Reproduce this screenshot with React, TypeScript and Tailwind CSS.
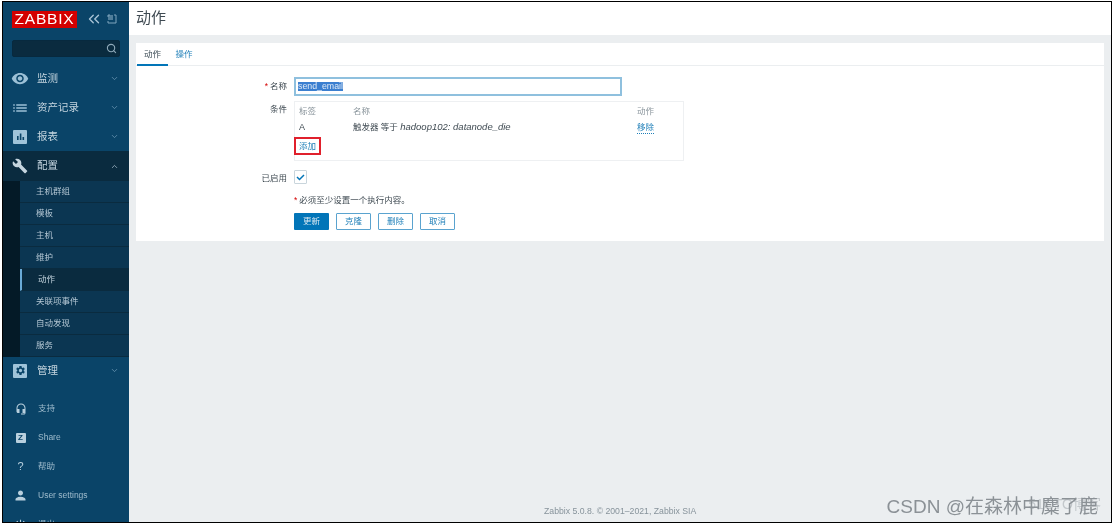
import { ChevronDown, ChevronUp, Search, ChevronsLeft } from "lucide-react";
import { MdBuild, MdHeadsetMic, MdList, MdPerson, MdPowerSettingsNew, MdSettings, MdVisibility } from "react-icons/md";

const font = { fontFamily: '"Liberation Sans", "Noto Sans CJK SC", sans-serif' };

const subItems = ["主机群组", "模板", "主机", "维护", "动作", "关联项事件", "自动发现", "服务"];

function BoxIcon({ children }: { children: React.ReactNode }) {
  return (
    <span className="flex h-[14px] w-[14px] items-center justify-center rounded-[1px] bg-[#9fc3d9] text-[#0a4468]">
      {children}
    </span>
  );
}

function MainItem({
  icon,
  label,
  open,
}: {
  icon: React.ReactNode;
  label: string;
  open?: boolean;
}) {
  return (
    <div className={`flex items-center pl-[8px] pr-[10px] ${open ? "h-[30px] bg-[#0a2b3f]" : "h-[29px]"}`}>
      <span className="flex w-[18px] justify-center text-[#9cc0d6]">{icon}</span>
      <span className="ml-[8px] flex-1 text-[10.5px] text-[#c5d5df]">{label}</span>
      {open ? (
        <ChevronUp size={9} strokeWidth={2} className="text-[#a9bfcd]" />
      ) : (
        <ChevronDown size={9} strokeWidth={2} className="text-[#6f9ab5]" />
      )}
    </div>
  );
}

function SmallItem({ icon, label }: { icon: React.ReactNode; label: string }) {
  return (
    <div className="flex h-[29px] items-center">
      <span className="flex w-[35px] justify-center text-[#b9d0de]">{icon}</span>
      <span className="text-[8.5px] text-[#9fbccd]">{label}</span>
    </div>
  );
}

function Sidebar() {
  return (
    <aside className="flex h-full w-[126px] shrink-0 flex-col overflow-hidden bg-[#0a4468]">
      <div className="flex h-[36px] shrink-0 items-center pb-[2px] pl-[9px]">
        <span className="flex h-[17px] w-[65px] items-center justify-center bg-[#d40000] text-[15.5px] tracking-[0.8px] text-white">
          ZABBIX
        </span>
        <ChevronsLeft size={18} strokeWidth={1.8} className="ml-[8px] text-[#a9c4d6]" />
        <svg width="10" height="10" viewBox="0 0 10 10" className="ml-[4px] text-[#7fa5bd]" fill="none" stroke="currentColor">
          <path d="M1 3V1h2M7 1h2v8H1V7" />
          <rect x="1" y="1" width="5" height="5" fill="currentColor" stroke="none" opacity="0.6" />
        </svg>
      </div>
      <div className="mx-[9px] mt-[2px] flex h-[17px] shrink-0 items-center justify-end rounded-[2px] border border-[#07293e] bg-[#0a2b3f] pr-[2px]">
        <Search size={11} strokeWidth={2.4} className="text-[#8fa9b9]" />
      </div>
      <div className="mt-[7px] flex flex-col">
        <MainItem icon={<MdVisibility size={19} />} label="监测" />
        <MainItem icon={<MdList size={18} />} label="资产记录" />
        <MainItem
          icon={
            <BoxIcon>
              <svg width="9" height="9" viewBox="0 0 9 9" fill="currentColor">
                <rect x="1" y="4" width="1.6" height="4" />
                <rect x="3.8" y="1.5" width="1.6" height="6.5" />
                <rect x="6.5" y="5" width="1.6" height="3" />
              </svg>
            </BoxIcon>
          }
          label="报表"
        />
        <MainItem icon={<MdBuild size={16} className="text-[#c5d5df]" />} label="配置" open />
        <div className="flex bg-[#041a27]">
          <div className="w-[17px] shrink-0" />
          <div className="flex flex-1 flex-col">
            {subItems.map((item) => {
              const active = item === "动作";
              return (
                <div
                  key={item}
                  className={`flex h-[22px] items-center border-b border-[#0a2b3f] pl-[16px] text-[8.5px] ${
                    active
                      ? "border-l-2 border-l-[#6aaad6] bg-[#0a2b3f] pl-[14px] text-[#c5d5df]"
                      : "bg-[#0b3652] text-[#b3c6d3]"
                  }`}
                >
                  {item}
                </div>
              );
            })}
          </div>
        </div>
        <div className="-mt-px">
          <MainItem
            icon={
              <BoxIcon>
                <MdSettings size={11} />
              </BoxIcon>
            }
            label="管理"
          />
        </div>
      </div>
      <div className="mt-[9px] flex flex-col">
        <SmallItem icon={<MdHeadsetMic size={12} />} label="支持" />
        <SmallItem
          icon={
            <span className="flex h-[10px] w-[10px] items-center justify-center rounded-[1px] bg-[#b9d0de] text-[8px] font-bold leading-none text-[#0a4468]">
              Z
            </span>
          }
          label="Share"
        />
        <SmallItem icon={<span className="text-[11px] leading-none">?</span>} label="帮助" />
        <SmallItem icon={<MdPerson size={15} />} label="User settings" />
        <SmallItem icon={<MdPowerSettingsNew size={13} />} label="退出" />
      </div>
    </aside>
  );
}

function ActionForm() {
  return (
    <div className="ml-[7px] mt-[8px] h-[198px] w-[968px] bg-white pt-[1px]">
      <div className="flex h-[22px] border-b border-[#ebeef0] pl-[1px] text-[8.5px]">
        <span className="-mb-px flex h-[22px] w-[31px] items-center justify-center border-b-2 border-[#0275b8] text-[#3a4a54]">
          动作
        </span>
        <span className="ml-[4px] flex w-[24px] items-center justify-center text-[#1f7fb8]">操作</span>
      </div>
      <div className="flex pt-[11px] text-[8.5px] text-[#3f4a52]">
        <div className="w-[151px] shrink-0 text-right">
          <div className="flex h-[19px] items-center justify-end">
            <span className="mr-[2px] text-[#d40000]">*</span>名称
          </div>
          <div className="mt-[7px] h-[12px] leading-[12px]">条件</div>
          <div className="mt-[56px] flex h-[14px] items-center justify-end">已启用</div>
        </div>
        <div className="ml-[7px] flex-1">
          <div className="flex h-[19px] w-[328px] items-center border-2 border-[#8fc0de] bg-white pl-[2px] text-[8.8px] leading-none">
            <span className="bg-[#3b7fd0] text-[#dfeaf6]">send_email</span>
          </div>
          <div className="relative mt-[5px] h-[60px] w-[390px] border border-[#eef0f2] pl-[4px] pt-[3px]">
            <div className="flex h-[12px] items-center text-[#8a959c]">
              <span className="w-[54px]">标签</span>
              <span className="w-[284px]">名称</span>
              <span>动作</span>
            </div>
            <div className="mt-[4px] flex h-[13px] items-center">
              <span className="w-[54px] text-[9px]">A</span>
              <span className="w-[284px]">
                触发器 等于 <i className="text-[9.5px]">hadoop102: datanode_die</i>
              </span>
              <span className="border-b border-dotted border-[#1f7fb8] leading-[11px] text-[#1f7fb8]">移除</span>
            </div>
            <span className="absolute -left-px top-[35px] flex h-[18px] w-[27px] items-center justify-center border-2 border-[#e0202c] text-[#1f7fb8]">
              添加
            </span>
          </div>
          <div className="mt-[9px] flex h-[14px] w-[13px] items-center justify-center rounded-[1px] border border-[#c9d5dc]">
            <svg width="9" height="7" viewBox="0 0 9 7" fill="none" stroke="#0275b8" strokeWidth="1.5">
              <path d="M1 3l2.5 2.5L8 1" />
            </svg>
          </div>
          <div className="mt-[10px] h-[13px] leading-[13px]">
            <span className="mr-[2px] text-[#d40000]">*</span>必须至少设置一个执行内容。
          </div>
          <div className="mt-[6px] flex gap-[7px]">
            <button className="h-[17px] w-[35px] rounded-[1px] bg-[#0275b8] text-[8.5px] text-[#dbe9f2]">更新</button>
            {["克隆", "删除", "取消"].map((label) => (
              <button
                key={label}
                className="h-[17px] w-[35px] rounded-[1px] border border-[#5aa3cf] text-[8.5px] text-[#1f7fb8]"
              >
                {label}
              </button>
            ))}
          </div>
        </div>
      </div>
    </div>
  );
}

export default function App() {
  return (
    <div className="h-[524px] w-[1112px] overflow-hidden bg-white pb-[1px] pl-[2px] pt-[1px] blur-[0.4px]" style={font}>
      <div className="flex h-full border border-black">
        <Sidebar />
        <main className="relative flex min-w-0 flex-1 flex-col bg-[#ebeef0]">
          <header className="flex h-[33px] shrink-0 items-center bg-white pl-[7px] text-[15px] text-[#3f4a52]">
            动作
          </header>
          <ActionForm />
          <footer className="mt-auto pb-[4px] pl-[415px] text-[8.7px] text-[#87939b]">
            Zabbix 5.0.8. © 2001–2021, Zabbix SIA
          </footer>
          <span className="absolute bottom-[7px] right-[10px] text-[14px] text-[#c3c8cc]">51CTO博客</span>
          <span className="absolute bottom-[1px] right-[13px] text-[19px] text-[#8b9196]">CSDN @在森林中麋了鹿</span>
        </main>
      </div>
    </div>
  );
}
